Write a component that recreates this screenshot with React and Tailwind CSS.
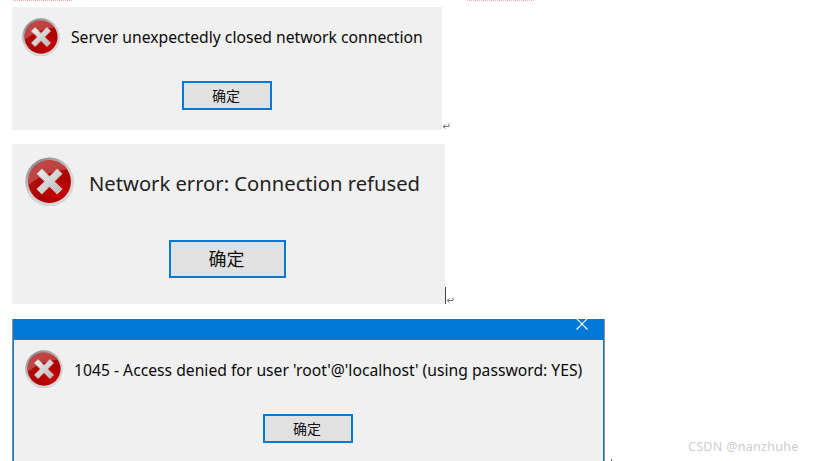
const FONT = 'font-["Noto_Sans","Noto_Sans_CJK_SC",sans-serif]';

function ErrorIcon({ size, id }) {
  return (
    <svg width={size} height={size} viewBox="0 0 48 48" className="shrink-0">
      <defs>
        <linearGradient id={`${id}-ring`} x1="0.2" y1="0" x2="0.8" y2="1">
          <stop offset="0" stopColor="#858585" />
          <stop offset="0.5" stopColor="#d2d2d2" />
          <stop offset="1" stopColor="#dadada" />
        </linearGradient>
        <radialGradient id={`${id}-red`} cx="0.72" cy="0.75" r="0.85">
          <stop offset="0" stopColor="#c90808" />
          <stop offset="0.45" stopColor="#ae0000" />
          <stop offset="1" stopColor="#b01818" />
        </radialGradient>
        <linearGradient id={`${id}-x`} x1="0" y1="0" x2="1" y2="1">
          <stop offset="0" stopColor="#f2f2f2" />
          <stop offset="1" stopColor="#b8b8b8" />
        </linearGradient>
      </defs>
      <circle cx="24" cy="24.6" r="23.8" fill="#9a9a9a" opacity="0.35" />
      <circle cx="24" cy="24" r="23.6" fill={`url(#${id}-ring)`} />
      <circle cx="24" cy="24" r="21" fill={`url(#${id}-red)`} />
      <path d="M3.4 22 A20.8 20.8 0 0 1 41 12 Q22 14 3.4 27 Z" fill="#ffffff" opacity="0.22" />
      <path
        d="M16.5 12 L24 19.5 L31.5 12 L36 16.5 L28.5 24 L36 31.5 L31.5 36 L24 28.5 L16.5 36 L12 31.5 L19.5 24 L12 16.5 Z"
        fill={`url(#${id}-x)`}
        stroke="#cfcfcf"
        strokeWidth="1"
        strokeLinejoin="round"
      />
    </svg>
  );
}

function ReturnMark() {
  return (
    <svg width="8" height="8" viewBox="0 0 8 8" className="shrink-0">
      <path d="M7 0.5 V3.5 H1.5 M3.5 1.5 L1 3.5 L3.5 5.5" fill="none" stroke="#777777" strokeWidth="1" />
    </svg>
  );
}

function OkButton({ className }) {
  return (
    <button className={`flex items-center justify-center border-2 border-[#0078d7] bg-[#e1e1e1] pr-[2px] text-[#111] ${className}`}>
      确定
    </button>
  );
}

export default function App() {
  return (
    <div className={`relative h-[461px] w-[821px] overflow-hidden bg-white pl-3 ${FONT}`}>
      {/* dotted marks along the top edge */}
      <div className="flex h-[7px] items-start">
        <div className="ml-[1px] w-[59px] border-t border-dotted border-[#ffa8a8]" />
        <div className="ml-[395px] w-[67px] border-t border-dotted border-[#ffa8a8]" />
      </div>

      <div className="flex items-end">
        <div className="h-[123px] w-[430px] bg-[#f0f0f0] pl-[10px] pt-[10px]">
          <div className="flex h-[40px] items-center">
            <ErrorIcon size={38} id="a" />
            <span className="ml-[11px] mt-[1px] text-[15.7px] text-[#0a0a0a]">Server unexpectedly closed network connection</span>
          </div>
          <OkButton className="ml-[160px] mt-[24px] h-[29px] w-[90px] text-[14px]" />
        </div>
        <div className="-mb-[1px]"><ReturnMark /></div>
      </div>

      <div className="mt-[14px] flex items-end">
        <div className="h-[160px] w-[433px] bg-[#f0f0f0] pl-[13px] pt-[13px] text-[#222]">
          <div className="flex h-[49px] items-center">
            <ErrorIcon size={49} id="b" />
            <span className="ml-[15px] mt-[3px] text-[20.2px]">Network error: Connection refused</span>
          </div>
          <OkButton className="ml-[144px] mt-[34px] h-[38px] w-[117px] text-[18px]" />
        </div>
        <div className="h-[17px] w-[1px] bg-[#444]" />
        <div className="-mb-[1px]"><ReturnMark /></div>
      </div>

      <div className="mt-[15px] h-[160px] w-[593px] border-x border-[#8f8f8f]">
        <div className="h-full border-x border-[#0078d7] bg-[#f0f0f0]">
          <div className="flex h-[21px] items-start justify-end overflow-hidden bg-[#0078d7] pr-[15px]">
            <svg width="12" height="11" viewBox="0 0 12 11">
              <path d="M0.5 -0.5 L11.5 10.5 M11.5 -0.5 L0.5 10.5" stroke="#ffffff" strokeWidth="1.1" fill="none" />
            </svg>
          </div>
          <div className="mt-[10px] flex h-[38px] items-center pl-[11px]">
            <ErrorIcon size={38} id="c" />
            <span className="ml-[11px] mt-[3px] text-[15.7px] text-[#0a0a0a]">1045 - Access denied for user 'root'@'localhost' (using password: YES)</span>
          </div>
          <OkButton className="ml-[249px] mt-[26px] h-[29px] w-[90px] text-[14px]" />
        </div>
      </div>

      <span className="absolute left-[688px] top-[438px] text-[12.5px] tracking-[0.3px] text-[#cdcdcd]">CSDN @nanzhuhe</span>
      <div className="absolute left-[611px] top-[459px] h-[2px] w-[1px] bg-[#666]" />
    </div>
  );
}
